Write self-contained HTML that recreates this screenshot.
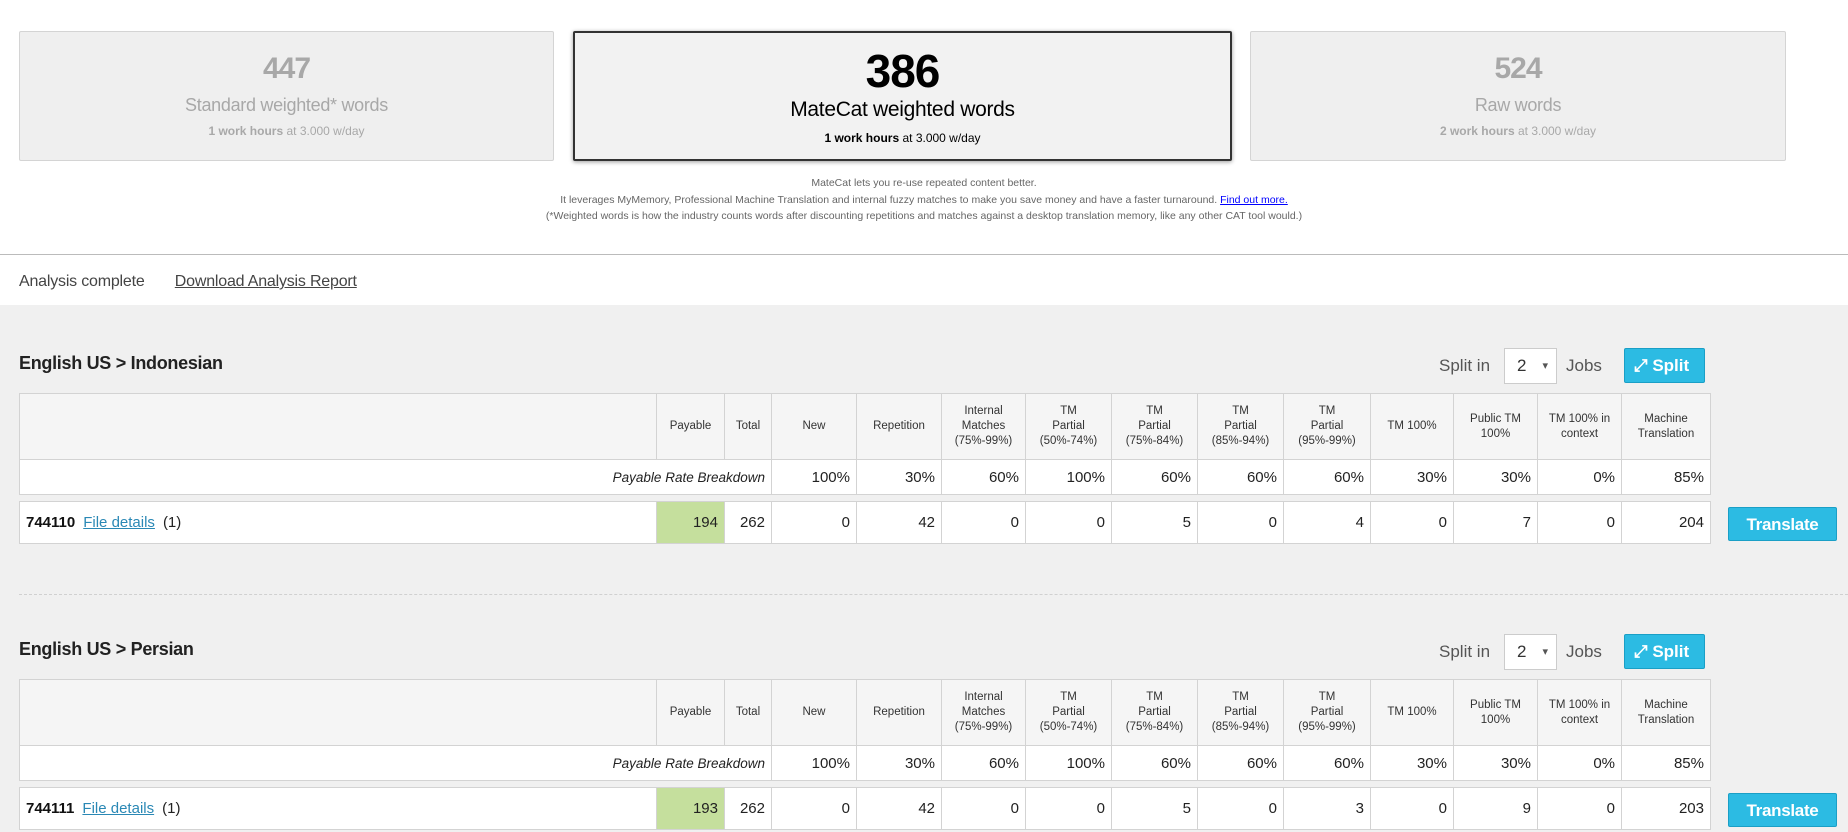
<!DOCTYPE html>
<html><head><meta charset="utf-8">
<style>
*{box-sizing:border-box;margin:0;padding:0}
body{width:1848px;height:832px;overflow:hidden;background:#fff;font-family:"Liberation Sans",sans-serif;position:relative;color:#333}
.box{position:absolute;top:31px;height:130px;background:#efefef;border:1px solid #d4d4d4;border-radius:2px;text-align:center;color:#a8a8a8}
.box .n{font-size:30px;font-weight:bold;margin-top:20px;letter-spacing:-1px}
.box .t{font-size:18px;margin-top:9px;letter-spacing:-0.3px}
.box .h{font-size:12px;margin-top:8px}
.box.main{border:2px solid #333;box-shadow:0 1px 4px rgba(0,0,0,.4);color:#000;background:#f2f2f2}
.box.main .n{font-size:46px;margin-top:11px}
.box.main .t{font-size:21px;margin-top:0px}
.box.main .h{margin-top:9px}
.info{position:absolute;top:175px;left:0;width:1848px;text-align:center;font-size:10.5px;color:#666;line-height:16.5px}
.info a{color:#00f;text-decoration:underline}
.hr{position:absolute;top:254px;left:0;width:1848px;height:1px;background:#bbb}
.status{position:absolute;top:273px;left:19px;font-size:16px;color:#444;letter-spacing:-0.2px}
.status a{margin-left:26px;color:#444;text-decoration:underline}
.gray{position:absolute;top:305px;left:0;width:1848px;height:527px;background:#f0f0f0}
.sec{position:absolute;left:0;width:1848px;height:290px}
.title{position:absolute;left:19px;top:353px;font-size:18px;font-weight:bold;color:#222;letter-spacing:-0.3px}
.split{position:absolute;top:348px;left:1439px;height:36px;font-size:17px;color:#555}
.split .l{position:absolute;left:0;top:8px;white-space:nowrap}
.split .sel{position:absolute;left:65px;top:0;width:53px;height:36px;background:#fff;border:1px solid #ccc;font-size:17px;padding:7px 0 0 12px;color:#333}
.split .sel:after{content:"▾";position:absolute;right:8px;top:10px;font-size:11px;color:#555}
.split .j{position:absolute;left:127px;top:8px}
.split .b{position:absolute;left:185px;top:0;width:81px;height:35px;background:#2cbbe3;border:1px solid #1a9fc6;border-radius:2px;color:#fff;font-weight:bold;font-size:17px;padding:7px 0 0 9px}
table{position:absolute;left:19px;border-collapse:collapse;table-layout:fixed;background:#fff;font-size:15px;color:#222}
td{border:1px solid #d3d3d3;text-align:right;padding:0 6px;white-space:nowrap;overflow:hidden}
.hd td{background:#f5f5f5;height:66px;text-align:center;font-size:11.5px;line-height:15px;padding:0 2px;white-space:normal;color:#333}
.rt td{height:35px}
.rt td.rb{font-style:italic;font-size:13.5px}
.dt td{height:42px}
.dt td.f{text-align:left;padding-left:6px}
.dt .f b{color:#111}
.dt .f a{color:#2a88b5;text-decoration:underline;margin:0 8px 0 8px}
.dt td.pay{background:#c5df9d}
.tr{position:absolute;left:1728px;width:109px;height:34px;background:#2cbbe3;border:1px solid #1a9fc6;border-radius:2px;color:#fff;font-weight:bold;font-size:17px;text-align:center;padding-top:7px;letter-spacing:-0.3px}
.dash{position:absolute;top:594px;left:19px;width:1829px;border-top:1px dashed #d0d0d0}
</style></head><body>
<div class="box" style="left:19px;width:535px"><div class="n">447</div><div class="t">Standard weighted* words</div><div class="h"><b>1 work hours</b> at 3.000 w/day</div></div>
<div class="box main" style="left:573px;width:659px"><div class="n">386</div><div class="t">MateCat weighted words</div><div class="h"><b>1 work hours</b> at 3.000 w/day</div></div>
<div class="box" style="left:1250px;width:536px"><div class="n">524</div><div class="t">Raw words</div><div class="h"><b>2 work hours</b> at 3.000 w/day</div></div>
<div class="info">MateCat lets you re-use repeated content better.<br>It leverages MyMemory, Professional Machine Translation and internal fuzzy matches to make you save money and have a faster turnaround. <a>Find out more.</a><br>(*Weighted words is how the industry counts words after discounting repetitions and matches against a desktop translation memory, like any other CAT tool would.)</div>
<div class="hr"></div>
<div class="status">Analysis complete <a>Download Analysis Report</a></div>
<div class="gray"></div>
<div class="dash"></div>

<div class="sec" style="top:0">
<div class="title">English US &gt; Indonesian</div>
<div class="split"><span class="l">Split in</span><div class="sel">2</div><span class="j">Jobs</span><div class="b">⤢ Split</div></div>
<table style="top:393px;width:1691px">
<colgroup><col style="width:637px"><col style="width:68px"><col style="width:47px"><col style="width:85px"><col style="width:85px"><col style="width:84px"><col style="width:86px"><col style="width:86px"><col style="width:86px"><col style="width:87px"><col style="width:83px"><col style="width:84px"><col style="width:84px"><col style="width:89px"></colgroup>
<tr class="hd"><td></td><td>Payable</td><td>Total</td><td>New</td><td>Repetition</td><td>Internal Matches (75%-99%)</td><td>TM<br>Partial<br>(50%-74%)</td><td>TM<br>Partial<br>(75%-84%)</td><td>TM<br>Partial<br>(85%-94%)</td><td>TM<br>Partial<br>(95%-99%)</td><td>TM 100%</td><td>Public TM 100%</td><td>TM 100% in context</td><td>Machine Translation</td></tr>
<tr class="rt"><td colspan="3" class="rb">Payable Rate Breakdown</td><td>100%</td><td>30%</td><td>60%</td><td>100%</td><td>60%</td><td>60%</td><td>60%</td><td>30%</td><td>30%</td><td>0%</td><td>85%</td></tr>
</table>
<table style="top:501px;width:1691px">
<colgroup><col style="width:637px"><col style="width:68px"><col style="width:47px"><col style="width:85px"><col style="width:85px"><col style="width:84px"><col style="width:86px"><col style="width:86px"><col style="width:86px"><col style="width:87px"><col style="width:83px"><col style="width:84px"><col style="width:84px"><col style="width:89px"></colgroup>
<tr class="dt"><td class="f"><b>744110</b><a>File details</a>(1)</td><td class="pay">194</td><td>262</td><td>0</td><td>42</td><td>0</td><td>0</td><td>5</td><td>0</td><td>4</td><td>0</td><td>7</td><td>0</td><td>204</td></tr>
</table>
<div class="tr" style="top:507px">Translate</div>
</div>

<div class="sec" style="top:286px">
<div class="title">English US &gt; Persian</div>
<div class="split"><span class="l">Split in</span><div class="sel">2</div><span class="j">Jobs</span><div class="b">⤢ Split</div></div>
<table style="top:393px;width:1691px">
<colgroup><col style="width:637px"><col style="width:68px"><col style="width:47px"><col style="width:85px"><col style="width:85px"><col style="width:84px"><col style="width:86px"><col style="width:86px"><col style="width:86px"><col style="width:87px"><col style="width:83px"><col style="width:84px"><col style="width:84px"><col style="width:89px"></colgroup>
<tr class="hd"><td></td><td>Payable</td><td>Total</td><td>New</td><td>Repetition</td><td>Internal Matches (75%-99%)</td><td>TM<br>Partial<br>(50%-74%)</td><td>TM<br>Partial<br>(75%-84%)</td><td>TM<br>Partial<br>(85%-94%)</td><td>TM<br>Partial<br>(95%-99%)</td><td>TM 100%</td><td>Public TM 100%</td><td>TM 100% in context</td><td>Machine Translation</td></tr>
<tr class="rt"><td colspan="3" class="rb">Payable Rate Breakdown</td><td>100%</td><td>30%</td><td>60%</td><td>100%</td><td>60%</td><td>60%</td><td>60%</td><td>30%</td><td>30%</td><td>0%</td><td>85%</td></tr>
</table>
<table style="top:501px;width:1691px">
<colgroup><col style="width:637px"><col style="width:68px"><col style="width:47px"><col style="width:85px"><col style="width:85px"><col style="width:84px"><col style="width:86px"><col style="width:86px"><col style="width:86px"><col style="width:87px"><col style="width:83px"><col style="width:84px"><col style="width:84px"><col style="width:89px"></colgroup>
<tr class="dt"><td class="f"><b>744111</b><a>File details</a>(1)</td><td class="pay">193</td><td>262</td><td>0</td><td>42</td><td>0</td><td>0</td><td>5</td><td>0</td><td>3</td><td>0</td><td>9</td><td>0</td><td>203</td></tr>
</table>
<div class="tr" style="top:507px">Translate</div>
</div>
</body></html>
